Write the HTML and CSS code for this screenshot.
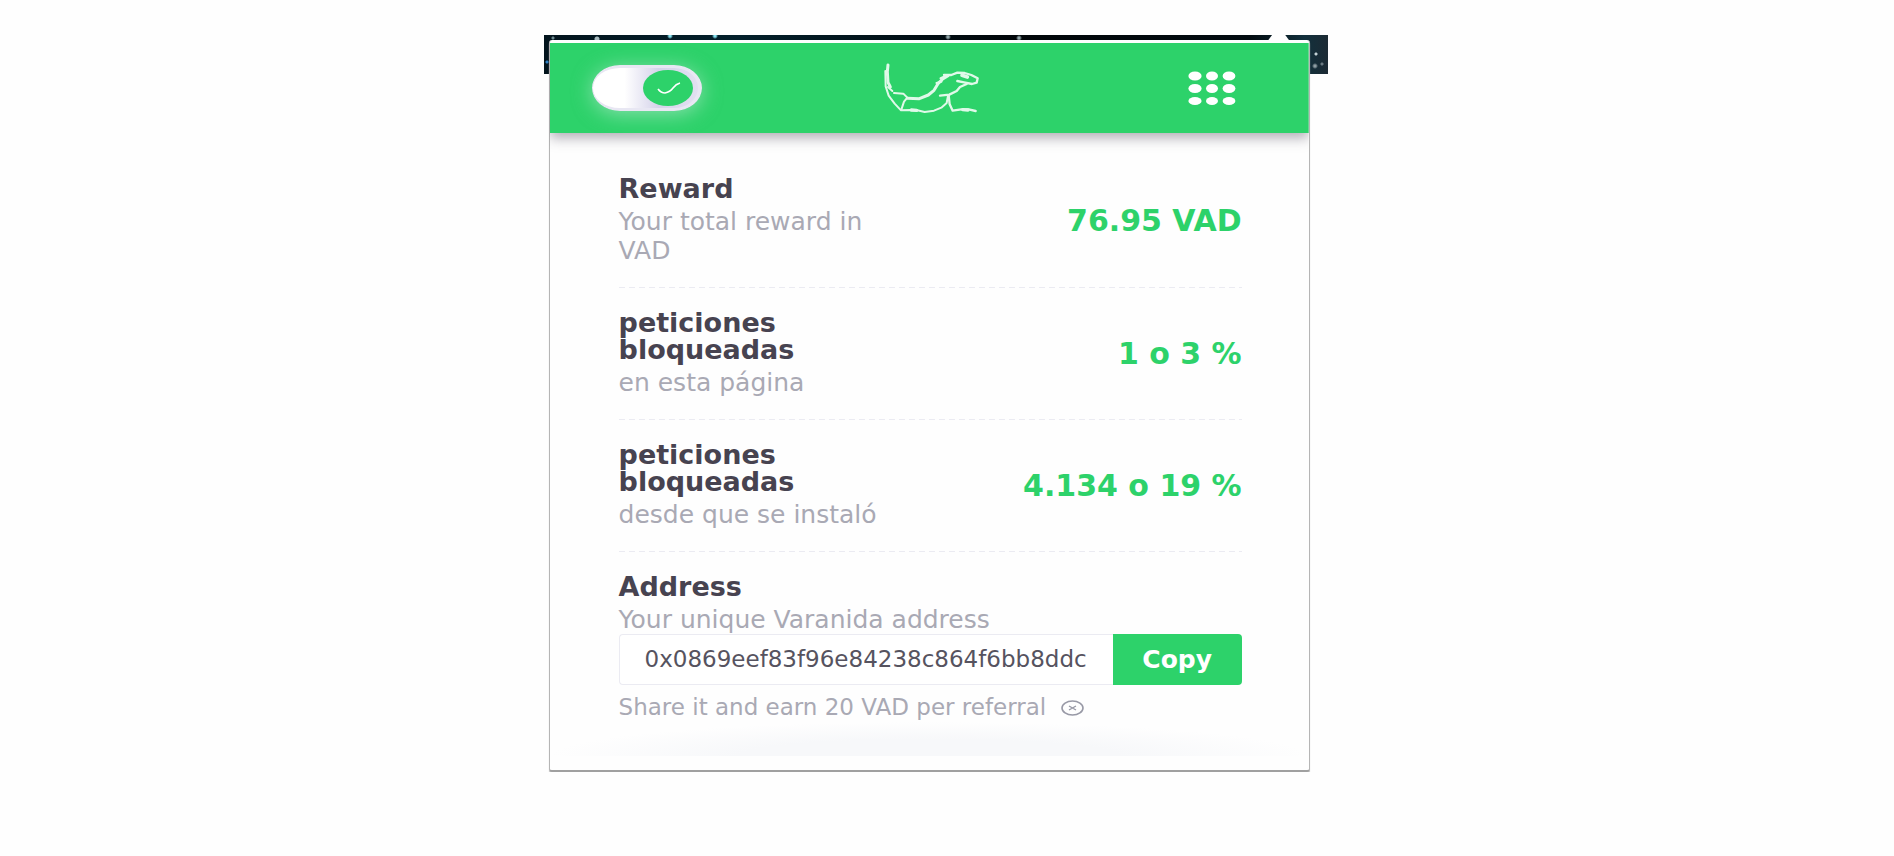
FILE: index.html
```
<!DOCTYPE html>
<html lang="es">
<head>
    <meta charset="UTF-8">
    <meta name="viewport" content="width=device-width, initial-scale=1.0">
    <title>Varanida</title>
    <link rel="stylesheet" href="styles.css">
</head>
<body>
    <div class="backdrop">
        <main class="popup">
            <header class="topbar">
                <label class="toggle">
                    <input type="checkbox" class="toggle-input" aria-label="Varanida" checked>
                    <svg class="toggle-knob" viewBox="0 0 50 36" aria-hidden="true">
                        <ellipse cx="25" cy="18" rx="25" ry="18" fill="#2dd26a"/>
                        <path d="M15 19q3 4 7 4q5-1 8-5t7-5" fill="none" stroke="#fff" stroke-width="1.6"/>
                    </svg>
                </label>
                <svg class="logo" viewBox="60 40 297 150" aria-hidden="true">
                    <g fill="none" stroke="#e0f9e9" stroke-linecap="round" stroke-linejoin="round">
                        <path stroke-width="9" d="M84 46L82 66L84 98L91 112"/>
                        <path stroke-width="6" d="M76 64L77 110L86 138L104 162L123 182L150 181L172 182L194 187L222 183L244 174L260 160L264 138"/>
                        <path stroke-width="6" d="M84 112L97 124M102 130L130 132L142 144L132 156L124 180"/>
                        <path stroke-width="9" d="M142 146L178 147L205 136L222 122L234 102L248 88L264 78"/>
                        <path stroke-width="7" d="M230 100L244 96M242 86L264 76M252 76L274 76L292 69L314 70L334 76L353 86L350 99L336 103L312 98L292 94"/>
                        <path stroke-width="11" d="M306 77L322 82"/>
                        <path stroke-width="7" d="M320 103L300 112L290 124L268 135L240 138M266 137L269 164L278 183L304 179L326 179L347 184"/>
                        <path stroke-width="10" d="M154 181L170 182M308 180L324 181"/>
                    </g>
                </svg>
                <button type="button" class="menu-btn" aria-label="Menu">
                    <svg class="dots" viewBox="0 0 50 34" fill="#fff" aria-hidden="true">
                        <ellipse cx="8" cy="5" rx="6.6" ry="4.6"/><ellipse cx="25" cy="5" rx="6" ry="4.6"/><ellipse cx="42" cy="5" rx="6.4" ry="4.6"/>
                        <ellipse cx="8" cy="17.5" rx="6.6" ry="4.6"/><ellipse cx="25" cy="17.5" rx="6" ry="4.6"/><ellipse cx="42" cy="17.5" rx="6.4" ry="4.6"/>
                        <ellipse cx="8" cy="30" rx="6.6" ry="4"/><ellipse cx="25" cy="30" rx="6" ry="4"/><ellipse cx="42" cy="30" rx="6.4" ry="4"/>
                    </svg>
                </button>
            </header>

            <div class="content">
                <section class="row">
                    <div class="row-text">
                        <h2 class="title">Reward</h2>
                        <p class="sub">Your total reward in VAD</p>
                    </div>
                    <div class="value">76.95 VAD</div>
                </section>
                <section class="row">
                    <div class="row-text">
                        <h2 class="title">peticiones bloqueadas</h2>
                        <p class="sub">en esta página</p>
                    </div>
                    <div class="value">1 o 3 %</div>
                </section>
                <section class="row">
                    <div class="row-text">
                        <h2 class="title">peticiones bloqueadas</h2>
                        <p class="sub">desde que se instaló</p>
                    </div>
                    <div class="value">4.134 o 19 %</div>
                </section>
                <section class="address">
                    <h2 class="title"><label for="address">Address</label></h2>
                    <p class="sub">Your unique Varanida address</p>
                    <div class="copy-group">
                        <input type="text" id="address" class="copy-input" value="0x0869eef83f96e84238c864f6bb8ddc" readonly>
                        <button type="button" class="copy-btn">Copy</button>
                    </div>
                    <p class="share">
                        Share it and earn 20 VAD per referral
                        <svg class="share-icon" viewBox="0 0 23 16" fill="none" stroke="#9899a6" aria-hidden="true">
                            <ellipse cx="11.5" cy="8" rx="10.5" ry="7" stroke-width="1.6"/>
                            <path d="M8 6l7 4M15 6l-7 4" stroke-width="1.4"/>
                        </svg>
                    </p>
                </section>
            </div>
            <div class="fade"></div>
        </main>
    </div>
</body>
</html>
```
FILE: styles.css
```
* {
    box-sizing: border-box;
}

body {
    margin: 0;
    padding-top: 35px;
    background: #fefefe;
    color: #474350;
    font-family: "DejaVu Sans", sans-serif;
}

h2,
p {
    margin: 0;
}

/* strip of starry wallpaper behind the popup */
.backdrop {
    position: relative;
    width: 41.4%;
    margin-left: 28.7%;
    padding: 5px 18px 0 5px;
    background:
        radial-gradient(circle at 9px 3px, #6d8a90 1px, transparent 2px),
        radial-gradient(circle at 53px 4px, #a9bcc0 2px, transparent 3px),
        radial-gradient(circle at 126px 1px, #86e0ee 1px, transparent 3px),
        radial-gradient(circle at 171px 1px, #86e0ee 1px, transparent 3px),
        radial-gradient(circle at 404px 2px, #90a5a8 1px, transparent 3px),
        radial-gradient(circle at 475px 3px, #90a5a8 1px, transparent 3px),
        radial-gradient(circle at 3px 27px, #2b7fc4 1px, transparent 2px),
        radial-gradient(circle at 772px 19px, #c4d2d6 1px, transparent 2px),
        radial-gradient(circle at 771px 31px, #8e9ca2 1px, transparent 3px),
        radial-gradient(circle at 778px 29px, #6b7a82 1px, transparent 2px),
        linear-gradient(to right, #03141d, #03202b 25%, #000508 60%, #020b10 90%, #12303c 97%, #1c2a34);
    background-size: 100% 39px;
    background-repeat: no-repeat;
}

/* tip of the popup arrow */
.backdrop::before {
    content: "";
    position: absolute;
    top: 0;
    right: 38px;
    width: 22px;
    height: 6px;
    background: #fefefe;
    clip-path: polygon(20% 0, 80% 0, 100% 100%, 0 100%);
}

.popup {
    padding-top: 3px;
    background: #fefefe;
    border: solid #b5b5b5;
    border-width: 0 1px 2px;
    border-bottom-color: #a0a0a0;
    border-radius: 3px;
    box-shadow: 0 2px 1px #c8c8c8;
}

.topbar {
    display: grid;
    grid-template-columns: 1fr auto 1fr;
    align-items: center;
    height: 90px;
    padding: 0 42px;
    background: #2dd26a;
    box-shadow: 0 5px 12px rgba(60, 55, 75, 0.4);
    /* keep the shadow below the bar only */
    clip-path: inset(0 0 -24px);
}

.toggle {
    position: relative;
    width: 110px;
    height: 46px;
}

.toggle-input {
    appearance: none;
    display: block;
    width: 100%;
    height: 100%;
    margin: 0;
    border: solid #e8e7f3;
    border-width: 3px 4px 3px 1px;
    border-radius: 28px / 23px;
    background: linear-gradient(to right, #fff 30%, #d5d3ea 62%, #e2e0f1);
    box-shadow: 0 3px 20px rgba(230, 240, 240, 0.5);
    cursor: pointer;
}

.toggle-knob {
    position: absolute;
    top: 5px;
    right: 9px;
    width: 50px;
    height: 36px;
    pointer-events: none;
}

.logo {
    width: 99px;
    height: 50px;
}

.menu-btn {
    justify-self: end;
    margin-right: 30px;
    padding: 0;
    border: none;
    background: none;
    cursor: pointer;
}

.dots {
    display: block;
    width: 50px;
    height: 34px;
}

.content {
    padding: 21px 67px 0 69px;
}

.row {
    display: flex;
    justify-content: space-between;
    align-items: center;
    padding: 21px 0 23px;
    background: repeating-linear-gradient(to right, #ebebf2 0 6px, transparent 6px 10px) left bottom / 100% 1px no-repeat;
}

.row-text {
    width: 46%;
}

.title {
    margin-bottom: 5px;
    font-size: 27px;
    font-weight: bold;
    line-height: 27px;
}

.sub {
    color: #a9a9b4;
    font-size: 25px;
    line-height: 29px;
}

.value {
    color: #2dd26a;
    font-size: 30px;
    font-weight: bold;
    white-space: nowrap;
}

.address {
    padding-top: 21px;
}

.copy-group {
    display: flex;
    height: 51px;
}

.copy-input {
    flex: 1;
    min-width: 0;
    padding: 0 25px 2px;
    border: 1px solid #ebebf2;
    border-right: none;
    border-radius: 4px 0 0 4px;
    background: #fff;
    color: #56535f;
    font-family: inherit;
    font-size: 23px;
}

.copy-btn {
    width: 129px;
    padding: 0;
    border: none;
    border-radius: 0 4px 4px 0;
    background: #2dd26a;
    color: #fff;
    font-family: inherit;
    font-size: 25px;
    font-weight: bold;
    cursor: pointer;
}

.share {
    display: flex;
    align-items: center;
    gap: 15px;
    padding-top: 8px;
    color: #a9a9b4;
    font-size: 23px;
    line-height: 29px;
    white-space: nowrap;
}

.share-icon {
    width: 23px;
    height: 16px;
}

.fade {
    height: 34px;
    margin-bottom: 14px;
    background: radial-gradient(ellipse 50% 100% at 50% 100%, #f7f8fa 50%, #fefefe);
}
```
